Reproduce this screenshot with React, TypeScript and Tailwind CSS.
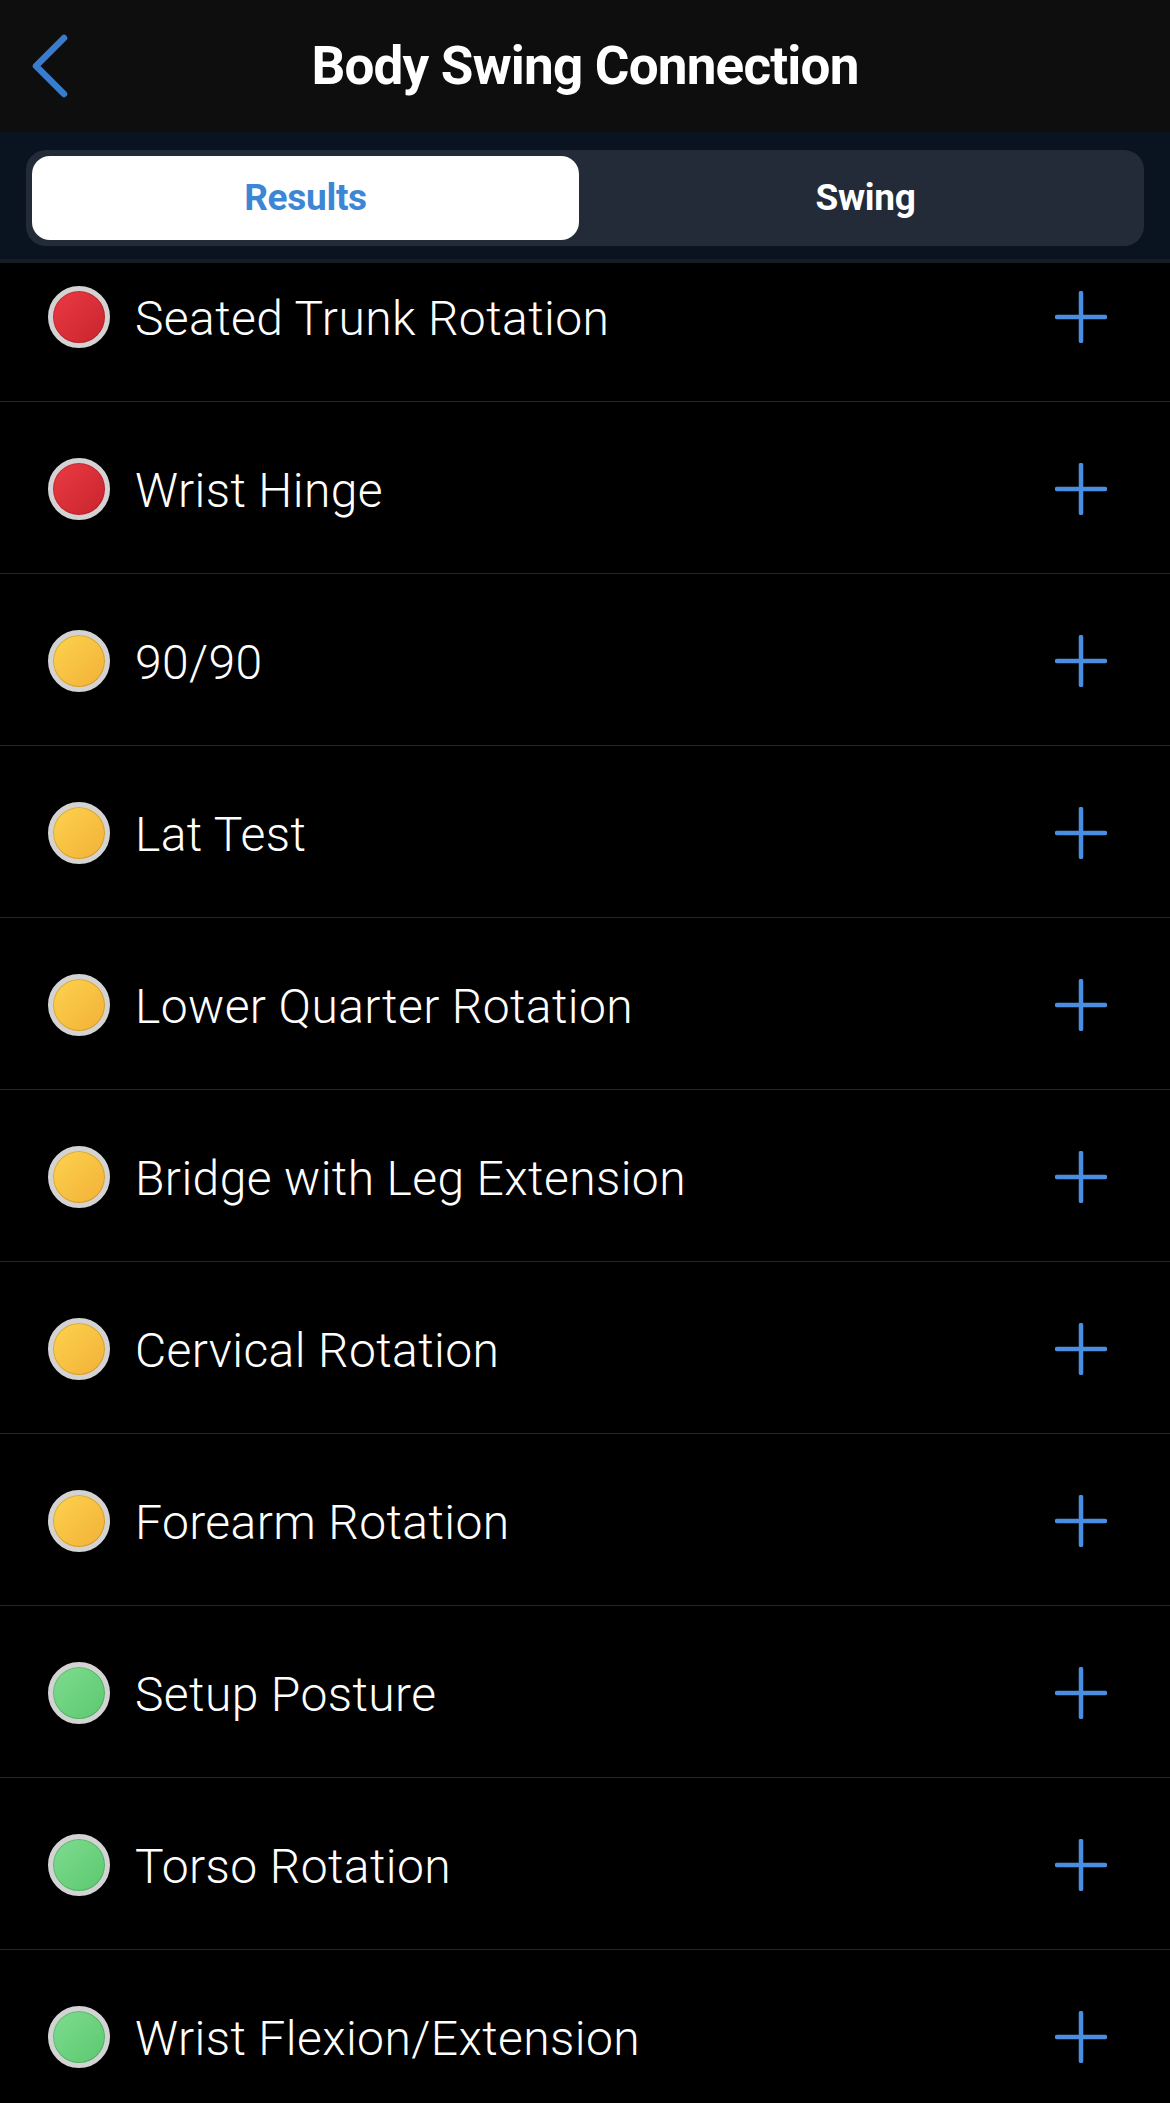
import { type ReactNode } from 'react'

type Status = 'red' | 'yellow' | 'green'

const tests: { name: string; status: Status }[] = [
  { name: 'Seated Trunk Rotation', status: 'red' },
  { name: 'Wrist Hinge', status: 'red' },
  { name: '90/90', status: 'yellow' },
  { name: 'Lat Test', status: 'yellow' },
  { name: 'Lower Quarter Rotation', status: 'yellow' },
  { name: 'Bridge with Leg Extension', status: 'yellow' },
  { name: 'Cervical Rotation', status: 'yellow' },
  { name: 'Forearm Rotation', status: 'yellow' },
  { name: 'Setup Posture', status: 'green' },
  { name: 'Torso Rotation', status: 'green' },
  { name: 'Wrist Flexion/Extension', status: 'green' },
]

const dotFill: Record<Status, string> = {
  red: 'bg-gradient-to-br from-[#ec3a44] to-[#c8242c]',
  yellow: 'bg-gradient-to-br from-[#fdd24e] to-[#f2b137]',
  green: 'bg-gradient-to-br from-[#7ddc8f] to-[#5cc86f]',
}

export default function App() {
  return (
    <div
      className="w-full h-[2103px] overflow-hidden bg-black text-white"
      style={{ fontFamily: "Roboto, 'Open Sans', sans-serif" }}
    >
      {/* ── Nav bar ── */}
      <header className="h-[132px] bg-[#0e0e0e] grid grid-cols-[1fr_auto_1fr] items-center">
        <div className="pl-[30px] flex items-center">
          <BackChevron />
        </div>
        <h1 className="text-[53px] font-bold leading-none tracking-[-0.8px]">Body Swing Connection</h1>
        <div />
      </header>

      {/* ── Segmented control ── */}
      <div className="h-[131px] bg-[#0a1320] pt-[18px] px-[26px] border-b-[4px] border-[#171d25]">
        <div className="h-[96px] rounded-[20px] bg-[#222b37] p-[6px] flex">
          <Tab active>Results</Tab>
          <Tab>Swing</Tab>
        </div>
      </div>

      {/* ── Results list ── */}
      <div className="-mt-[33px]">
        {tests.map(t => (
          <div key={t.name} className="h-[172px] flex items-center pt-[3px] pl-[48px] pr-[63px] border-b border-[#22272e]">
            <div className={`w-[62px] h-[62px] rounded-full border-[5px] border-[#d3d3d3] shadow-[inset_0_0_0_1px_rgba(0,0,0,0.15)] ${dotFill[t.status]}`} />
            <span className="ml-[25px] pt-[3px] text-[48px] font-light leading-none tracking-[0.4px] flex-1">{t.name}</span>
            <PlusIcon />
          </div>
        ))}
      </div>
    </div>
  )
}

function Tab({ active, children }: { active?: boolean; children: ReactNode }) {
  return (
    <div
      className={`flex items-center justify-center rounded-[18px] text-[37px] font-bold tracking-[-0.3px] ${
        active ? 'w-[547px] bg-white text-[#3d86d6]' : 'flex-1 pl-[14px] text-white'
      }`}
    >
      {children}
    </div>
  )
}

function BackChevron() {
  return (
    <svg width="40" height="66" viewBox="0 0 40 66" fill="none">
      <path d="M34 5 L6 33 L34 61" stroke="#3a7ccc" strokeWidth="6.5" strokeLinecap="round" strokeLinejoin="round" />
    </svg>
  )
}

function PlusIcon() {
  return (
    <svg width="52" height="52" viewBox="0 0 52 52" fill="none">
      <path d="M26 2 V50 M2 26 H50" stroke="#4a8ee2" strokeWidth="4.5" strokeLinecap="round" />
    </svg>
  )
}
